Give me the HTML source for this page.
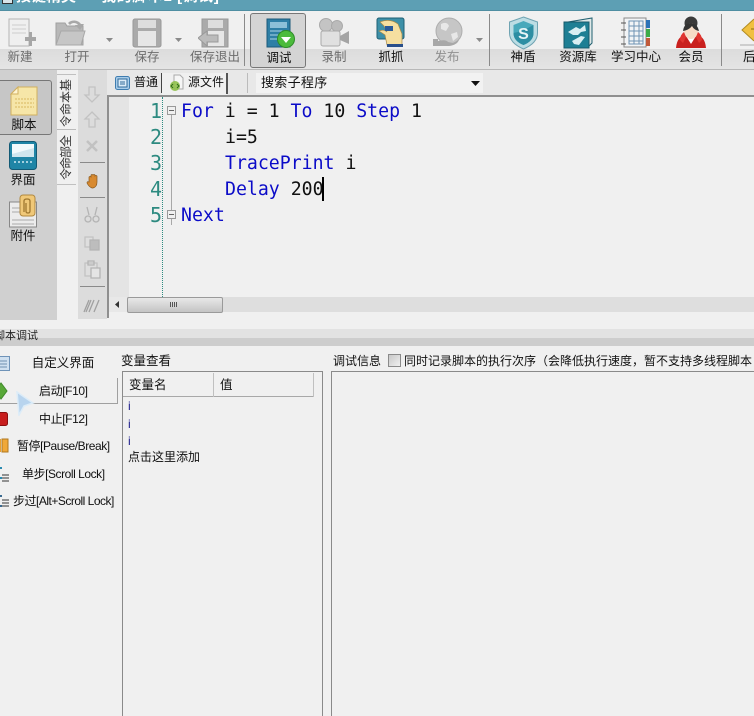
<!DOCTYPE html>
<html><head><meta charset="utf-8">
<style>
html,body{margin:0;padding:0;background:#f0f0f0}
#r{position:relative;width:754px;height:716px;overflow:hidden;background:#f0f0f0;font-family:"Liberation Sans","Noto Sans CJK SC",sans-serif;font-size:12px;color:#111}
#r div,#r svg{position:absolute}
.t{white-space:nowrap;line-height:14px}
.c{text-align:center;white-space:nowrap;line-height:14px}
.g{color:#6c6c6c}
.code{font-family:"DejaVu Sans Mono","Liberation Mono",monospace;font-size:18.2px;line-height:26px;white-space:pre;color:#111}
.b{color:#0b0bc8}
.n{font-family:"DejaVu Sans Mono",monospace;font-size:20px;line-height:26px;color:#2d8a80;text-align:right;width:20px;left:142px}
.sep{background:#8a8a8a;width:1px}
#r .v{left:60px;width:12px;height:12px;font-size:12px;line-height:12px;text-align:center;color:#333;transform:rotate(-90deg)}
</style></head><body><div id="r">

<!-- title bar -->
<div style="left:0;top:0;width:754px;height:11px;background:#5d9fb4"></div>
<div style="left:0;top:10px;width:754px;height:1px;background:#4f8ea2"></div>
<div style="left:0;top:0;width:754px;height:11px;overflow:hidden">
  <div class="t" style="left:2px;top:-7px;width:9px;height:9px;background:#d8e4e8;border:1px solid #333"></div>
  <div class="t" style="left:16px;top:-11px;color:#fff;font-size:15px;font-weight:bold;line-height:15px">按键精灵</div>
  <div class="t" style="left:101px;top:-11px;color:#fff;font-size:15px;font-weight:bold;line-height:15px;letter-spacing:.6px">我的脚本1 [调试]</div>
</div>

<!-- toolbar -->
<div style="left:0;top:11px;width:754px;height:38px;background:#f0f0f0"></div>
<div style="left:0;top:49px;width:754px;height:20px;background:linear-gradient(#dcdcdc,#e4e4e4)"></div>
<div style="left:0;top:69px;width:754px;height:1px;background:#b8b8b8"></div>

<div class="sep" style="left:244px;top:14px;height:52px"></div>
<div class="sep" style="left:489px;top:14px;height:52px"></div>
<div class="sep" style="left:721px;top:14px;height:52px"></div>

<!-- selected debug button -->
<div style="left:250px;top:13px;width:54px;height:53px;background:#d4d4d4;border:1px solid #777;border-radius:3px"></div>

<!-- new -->
<svg style="left:8px;top:18px" width="28" height="30"><path d="M1 1h20v27H1z" fill="#efefef" stroke="#b4b4b4"/><path d="M4 7h14M4 11h14M4 15h14" stroke="#ccc"/><path d="M17 19h4v-5h3v5h4v4h-4v5h-3v-5h-4z" fill="#a6a6a6"/></svg>
<!-- open -->
<svg style="left:54px;top:15px" width="32" height="32"><path d="M2 8h9l2 3h16v19H2z" fill="#b8b8b8" stroke="#a0a0a0"/><path d="M14 8a8 7 0 0 1 13 1l3 0-4 6-5-5 3 0a5 5 0 0 0-8 0z" fill="#a8a8a8"/><path d="M2 30l5-14h24l-4 14z" fill="#c6c6c6" stroke="#a8a8a8"/></svg>
<svg style="left:106px;top:38px" width="8" height="5"><path d="M0 0h7L3.500 4z" fill="#8a8a8a"/></svg>
<!-- save -->
<svg style="left:132px;top:18px" width="30" height="30"><rect x="1" y="1" width="28" height="28" rx="2" fill="#aaa" stroke="#999"/><rect x="6" y="2" width="18" height="8" fill="#ddd"/><rect x="6" y="13" width="18" height="15" fill="#e6e6e6"/></svg>
<svg style="left:175px;top:38px" width="8" height="5"><path d="M0 0h7L3.500 4z" fill="#8a8a8a"/></svg>
<!-- save exit -->
<svg style="left:198px;top:18px" width="33" height="30"><path d="M4 1h26v28H4z" fill="#aaa" stroke="#999"/><rect x="10" y="2" width="15" height="8" fill="#ddd"/><rect x="10" y="13" width="16" height="15" fill="#e6e6e6"/><path d="M0 20l9-7v4h11v7H9v4z" fill="#bbb" stroke="#999"/></svg>
<!-- debug -->
<svg style="left:266px;top:18px" width="31" height="32"><rect x="1" y="1" width="23" height="28" fill="#2e7fa6" stroke="#1b5a7a"/><rect x="4" y="4" width="17" height="6" fill="#8cc0d8"/><path d="M4 13h16M4 17h12M4 21h14" stroke="#a9d4e6"/><circle cx="20" cy="21" r="8.500" fill="#4cbb3c" stroke="#2d8c28"/><path d="M15 19h10l-5 6z" fill="#fff"/></svg>
<!-- record -->
<svg style="left:318px;top:18px" width="33" height="30"><circle cx="8" cy="7" r="6.500" fill="#c4c4c4" stroke="#aaa"/><circle cx="19" cy="8" r="5.500" fill="#bbb" stroke="#aaa"/><rect x="3" y="13" width="19" height="15" rx="2" fill="#e0e0e0" stroke="#aaa"/><path d="M22 18l9-5v13l-9-4z" fill="#a4a4a4"/></svg>
<!-- grab -->
<svg style="left:376px;top:17px" width="30" height="32"><rect x="1" y="1" width="27" height="21" rx="2" fill="#3d90a8" stroke="#1f5f75"/><path d="M4 5q10-4 18 2l4 10v11H11l-2-10-6-4q5-2 8 1l-3-6z" fill="#f6dfa0" stroke="#a88a4a" stroke-width=".7"/><rect x="9" y="9" width="8" height="5" fill="#2a5a9a"/><rect x="11" y="27" width="16" height="3" fill="#2a4f8a"/></svg>
<!-- publish -->
<svg style="left:432px;top:17px" width="32" height="31"><circle cx="17" cy="14" r="13" fill="#c6c6c6" stroke="#adadad"/><path d="M9 7q6-3 8 2l-3 5-5-2zM19 17l6-2 1 5-5 4z" fill="#e8e8e8"/><path d="M1 22h5v7H1zM6 24q8-2 10 1l5 1 6-3q-2 5-10 6H6z" fill="#a8a8a8"/></svg>
<svg style="left:476px;top:38px" width="8" height="5"><path d="M0 0h7L3.500 4z" fill="#8a8a8a"/></svg>
<!-- shield -->
<svg style="left:508px;top:16px" width="31" height="34"><path d="M15.500 1l14 5v11q0 10-14 16Q1.500 27 1.500 17V6z" fill="#bcdde4" stroke="#6fa3b2"/><path d="M15.500 5l10 4v8q0 8-10 12-10-4-10-12V9z" fill="#48a9bb"/><path d="M5.500 17q10-2 20-8v8q0 8-10 12-10-4-10-12z" fill="#2d8ea3"/><text x="15.500" y="23" text-anchor="middle" font-family="Liberation Sans" font-size="16" font-weight="bold" fill="#e6f4f6">S</text></svg>
<!-- resource -->
<svg style="left:563px;top:17px" width="32" height="32"><path d="M5 5l24-4v25l-4 4z" fill="#dfe8e8" stroke="#1f5f70"/><rect x="1" y="5" width="25" height="26" fill="#1e7f94" stroke="#175a6a"/><path d="M5 15l8-5 4 2 5-4 1 6-5 1-3 3-5 0zM9 24l9-5 4 1-6 8-5-1z" fill="#d8eef2"/></svg>
<!-- study -->
<svg style="left:620px;top:17px" width="32" height="31"><rect x="4" y="1" width="22" height="29" fill="#f2f4f6" stroke="#8a8a8a"/><path d="M9 4h14v23H9zM9 9h14M9 14h14M9 19h14M9 24h14M14 4v23M19 4v23" fill="none" stroke="#6f93b4"/><path d="M1 6h5M1 13h5M1 20h5M1 27h5" stroke="#555"/><rect x="26" y="3" width="4" height="8" fill="#2c73b8"/><rect x="26" y="12" width="4" height="8" fill="#3bab4a"/><rect x="26" y="21" width="4" height="8" fill="#c05a3a"/></svg>
<!-- member -->
<svg style="left:675px;top:16px" width="32" height="34"><path d="M1 32q1-12 10-13l5 5 5-5q9 1 10 13z" fill="#c9201e"/><path d="M11 20l5 8 5-8z" fill="#fff"/><ellipse cx="16" cy="7" rx="6.500" ry="6.500" fill="#3a3a3a"/><ellipse cx="16" cy="15" rx="7" ry="8" fill="#f7dcc6"/><path d="M8 15q1-8 8-8 6 0 8 8-5-1-7-5-3 4-9 5z" fill="#333"/><path d="M5 24q0-5 4-8l2 5-3 6zM27 24q0-5-4-8l-2 5 3 6z" fill="#e0352f"/></svg>
<!-- back -->
<svg style="left:740px;top:18px" width="14" height="28"><path d="M14 1L2 12l12 11" fill="#f0c040" stroke="#b08a20"/><path d="M11 11H14" stroke="#8a6a10"/><path d="M0 27h14" stroke="#aaa"/></svg>

<div class="c g" style="left:5px;top:50px;width:30px;font-size:12.500px">新建</div>
<div class="c g" style="left:62px;top:50px;width:30px;font-size:12.500px">打开</div>
<div class="c g" style="left:132px;top:50px;width:30px;font-size:12.500px">保存</div>
<div class="c g" style="left:187px;top:50px;width:56px;font-size:12.500px">保存退出</div>
<div class="c" style="left:264px;top:51px;width:30px;font-size:12.500px">调试</div>
<div class="c g" style="left:319px;top:50px;width:30px;font-size:12.500px">录制</div>
<div class="c" style="left:376px;top:50px;width:30px;font-size:12.500px">抓抓</div>
<div class="c" style="left:432px;top:50px;width:30px;font-size:12.500px;color:#909090">发布</div>
<div class="c" style="left:508px;top:50px;width:30px;font-size:12.500px">神盾</div>
<div class="c" style="left:555px;top:50px;width:46px;font-size:12.500px">资源库</div>
<div class="c" style="left:608px;top:50px;width:56px;font-size:12.500px">学习中心</div>
<div class="c" style="left:676px;top:50px;width:30px;font-size:12.500px">会员</div>
<div class="t" style="left:743px;top:50px;font-size:12.500px">后</div>

<!-- tab row -->
<div style="left:107px;top:70px;width:647px;height:25px;background:#e8e8e8"></div>
<div style="left:107px;top:95px;width:647px;height:2px;background:#8f8f8f"></div>
<svg style="left:115px;top:76px" width="15" height="14"><rect x=".5" y=".5" width="14" height="13" rx="2" fill="#a9cdea" stroke="#3f7db0"/><rect x="3" y="3" width="9" height="8" fill="#dcecf8" stroke="#2f6a9a"/><path d="M5 6h5M5 8h5" stroke="#2f6a9a"/></svg>
<div class="t" style="left:134px;top:75px;font-size:12px">普通</div>
<div style="left:161px;top:73px;width:1px;height:20px;background:#444"></div>
<div style="left:162px;top:73px;width:65px;height:22px;background:#f0f0f0"></div>
<div style="left:226px;top:73px;width:2px;height:21px;background:#555"></div>
<svg style="left:169px;top:74px" width="15" height="17"><path d="M5 1h6l3 3v11H5z" fill="#f6f6f6" stroke="#aaa"/><circle cx="6" cy="12" r="5" fill="#8fc04a" opacity=".9"/><path d="M4 10l-2 2 2 2M8 10l2 2-2 2" stroke="#2f6a1a" fill="none"/></svg>
<div class="t" style="left:188px;top:75px;font-size:12px">源文件</div>
<div style="left:247px;top:73px;width:1px;height:20px;background:#bbb"></div>
<div style="left:256px;top:73px;width:227px;height:20px;background:#f2f2f2"></div>
<div class="t" style="left:261px;top:76px;font-size:13px;letter-spacing:.3px">搜索子程序</div>
<svg style="left:471px;top:81px" width="9" height="5"><path d="M0 0h9L4.500 5z" fill="#111"/></svg>

<!-- left panel -->
<div style="left:0;top:70px;width:57px;height:250px;background:#d0d0d0"></div>
<div style="left:-3px;top:80px;width:53px;height:53px;background:#c6c6c6;border:1px solid #777;border-radius:3px"></div>
<svg style="left:10px;top:86px" width="28" height="30"><path d="M8 1h19v28H1V8z" fill="#f6e6a8" stroke="#d0b060"/><path d="M1 8l7-7v7z" fill="#fff5d0" stroke="#d0b060"/><path d="M5 13h19M5 17h19M5 21h19" stroke="#d8b860" stroke-dasharray="2 1"/></svg>
<div class="c" style="left:9px;top:118px;width:30px;font-size:12.500px">脚本</div>
<svg style="left:9px;top:141px" width="28" height="29"><rect x=".5" y=".5" width="27" height="28" rx="3" fill="#1f85a6" stroke="#135a75"/><rect x="3" y="3" width="22" height="13" fill="#cfe6ee"/><path d="M3 3h22v4L3 13z" fill="#f2fafc"/><path d="M5 21h18" stroke="#cfeaf2" stroke-dasharray="2 2" stroke-width="1.500"/></svg>
<div class="c" style="left:8px;top:173px;width:30px;font-size:12.500px">界面</div>
<svg style="left:9px;top:194px" width="29" height="34"><rect x=".5" y="8" width="27" height="25" fill="#ececec" stroke="#888"/><path d="M3 14h14M3 18h14M3 26h22M3 30h22" stroke="#aaa"/><rect x="11" y="1" width="15" height="21" rx="3" fill="#f0c878" stroke="#b08840"/><path d="M15 18V7q0-2 3-2t3 2v10q0 2-2 2t-2-2V9" fill="none" stroke="#a07830" stroke-width="1.300"/></svg>
<div class="c" style="left:8px;top:229px;width:30px;font-size:12.500px">附件</div>

<!-- vertical tabs -->
<div style="left:57px;top:74px;width:19px;height:111px;background:#f0f0f0;border-top:1px solid #c0c0c0;border-bottom:1px solid #c0c0c0;box-sizing:border-box"></div>
<div style="left:57px;top:129px;width:19px;height:1px;background:#bbb"></div>
<div class="v" style="top:79px">基</div>
<div class="v" style="top:91px">本</div>
<div class="v" style="top:103px">命</div>
<div class="v" style="top:115px">令</div>
<div class="v" style="top:135px">全</div>
<div class="v" style="top:146px">部</div>
<div class="v" style="top:157px">命</div>
<div class="v" style="top:168px">令</div>

<!-- tool strip -->
<div style="left:78px;top:70px;width:29px;height:249px;background:#dcdcdc"></div>
<div style="left:107px;top:96px;width:2px;height:222px;background:#8f8f8f"></div>
<svg style="left:78px;top:70px" width="29" height="249" fill="none" stroke="#c2c2c2" stroke-width="1.300">
<path d="M11 17h6v8h4l-7 7-7-7h4z"/>
<path d="M14 42l7 7h-4v8h-6v-8H7z"/>
<path d="M9 71l10 10M19 71L9 81" stroke-width="2.500"/>
<path d="M2 92.500h25M2 127.500h25M2 216.500h25" stroke="#8a8a8a" stroke-width="1"/>
<path d="M11 145l-2-8M17 145l2-8" stroke="#b4b4b4"/>
<circle cx="10" cy="149" r="3" stroke="#b4b4b4"/><circle cx="18" cy="149" r="3" stroke="#b4b4b4"/>
<path d="M7 167h8v10H7z" fill="#dedede" stroke="#c2c2c2"/><path d="M12 170h9v10h-9z" fill="#bdbdbd" stroke="#b4b4b4"/>
<path d="M7 193h12v13H7z" fill="#dedede"/><path d="M10 191h6v4h-6z" stroke="#b4b4b4"/><path d="M13 198h9v10h-9z" fill="#e4e4e4" stroke="#b4b4b4"/>
<path d="M11 230l-5 12M16 230l-5 12M21 230l-5 12M13 230l-5 12" stroke-width="1.300" stroke="#a0a0a0"/>
</svg>
<svg style="left:86px;top:173px" width="14" height="16"><path d="M3 8V4q1-1 2 0V2q1-1 2 0v0q1-1 2 0v1q1-1 2 0v6q0 5-4 6H6Q3 14 1 10q0-2 2-1z" fill="#d88a30" stroke="#8a5a20" stroke-width=".7"/></svg>

<!-- editor -->
<div style="left:109px;top:97px;width:645px;height:200px;background:#f0f0f0"></div>
<div style="left:109px;top:97px;width:20px;height:200px;background:#e4e4e4"></div>
<div style="left:162px;top:97px;width:0;height:200px;border-left:1px dotted #2d8a80"></div>

<div class="n" style="top:98px">1</div>
<div class="n" style="top:124px">2</div>
<div class="n" style="top:150px">3</div>
<div class="n" style="top:176px">4</div>
<div class="n" style="top:202px">5</div>

<div style="left:171px;top:107px;width:1px;height:118px;background:#a8a8a8"></div>
<div style="left:167px;top:106px;width:7px;height:7px;background:#f0f0f0;border:1px solid #999"></div>
<div style="left:169px;top:110px;width:5px;height:1px;background:#666"></div>
<div style="left:167px;top:210px;width:7px;height:7px;background:#f0f0f0;border:1px solid #999"></div>
<div style="left:169px;top:214px;width:5px;height:1px;background:#666"></div>

<div class="code" style="left:181px;top:99px"><span class="b">For</span> i = 1 <span class="b">To</span> 10 <span class="b">Step</span> 1</div>
<div class="code" style="left:225px;top:125px">i=5</div>
<div class="code" style="left:225px;top:151px"><span class="b">TracePrint</span> i</div>
<div class="code" style="left:225px;top:177px"><span class="b">Delay</span> 200</div>
<div class="code" style="left:181px;top:203px"><span class="b">Next</span></div>
<div style="left:322px;top:177px;width:2px;height:24px;background:#000"></div>

<!-- h scrollbar -->
<div style="left:109px;top:297px;width:645px;height:15px;background:#dedede"></div>
<div style="left:109px;top:297px;width:18px;height:15px;background:#e8e8e8"></div>
<svg style="left:115px;top:301px" width="5" height="7"><path d="M4 0v7L0 3.500z" fill="#333"/></svg>
<div style="left:127px;top:297px;width:94px;height:14px;background:linear-gradient(#e8e8e8,#c4c4c4);border:1px solid #9a9a9a;border-radius:2px"></div>
<div style="left:170px;top:302px;width:7px;height:5px;background:repeating-linear-gradient(90deg,#555 0 1px,transparent 1px 2px)"></div>

<!-- debug header -->
<div style="left:0;top:329px;width:754px;height:9px;background:#e2e2e2"></div>
<div style="left:0;top:338px;width:754px;height:8px;background:#cdcdcd"></div>
<div class="t" style="left:-6px;top:329px;font-size:11px;color:#222">脚本调试</div>

<!-- debug left buttons -->
<svg style="left:-4px;top:356px" width="14" height="15"><rect x=".5" y=".5" width="13" height="14" fill="#cfe0f0" stroke="#6f93b8"/><path d="M3 5h8M3 8h8M3 11h8" stroke="#6f8fb0"/></svg>
<div class="c" style="left:28px;top:356px;width:70px;font-size:12.500px">自定义界面</div>

<div style="left:0;top:403px;width:118px;height:1px;background:#a0a0a0"></div>
<div style="left:117px;top:378px;width:1px;height:26px;background:#a0a0a0"></div>
<svg style="left:-5px;top:382px" width="13" height="18"><path d="M0 9l6-8 6 8-6 8z" fill="#58a838" stroke="#3f8a2a"/></svg>
<svg style="left:15px;top:391px" width="20" height="25"><path d="M2 1l16 11-9 3-5 9z" fill="#b8d4ee" stroke="#dcecf8" stroke-width="1.500"/></svg>
<div class="t" style="left:39px;top:384px;font-size:12px;letter-spacing:-.4px">启动[F10]</div>

<svg style="left:-4px;top:412px" width="12" height="14"><rect x=".5" y=".5" width="11" height="13" rx="2" fill="#c81e1e" stroke="#8a1010"/></svg>
<div class="t" style="left:39px;top:412px;font-size:12px;letter-spacing:-.4px">中止[F12]</div>

<svg style="left:-4px;top:438px" width="13" height="15"><rect x="0" y="1" width="5" height="13" fill="#e8a030"/><rect x="6" y="1" width="6" height="13" fill="#f0a838" stroke="#b07820"/></svg>
<div class="t" style="left:17px;top:439px;font-size:12px;letter-spacing:-.45px">暂停[Pause/Break]</div>

<svg style="left:-3px;top:467px" width="13" height="16"><path d="M0 1h5M0 6h3M0 11h5" stroke="#2a8ab0" stroke-width="2"/><path d="M5 8h7M5 11h7M5 14h7" stroke="#333"/></svg>
<div class="t" style="left:22px;top:467px;font-size:12px;letter-spacing:-.45px">单步[Scroll Lock]</div>

<svg style="left:-3px;top:495px" width="13" height="16"><path d="M0 1h5M0 6h3M0 11h5" stroke="#3a6a90" stroke-width="2"/><path d="M5 5h7M5 8h7M5 11h7" stroke="#333"/></svg>
<div class="t" style="left:13px;top:494px;font-size:12px;letter-spacing:-.5px">步过[Alt+Scroll Lock]</div>

<!-- variables -->
<div class="t" style="left:121px;top:354px;font-size:12.500px">变量查看</div>
<div style="left:122px;top:371px;width:201px;height:346px;border:1px solid #8a8a8a;border-bottom:none;box-sizing:border-box"></div>
<div style="left:123px;top:396px;width:191px;height:1px;background:#a8a8a8"></div>
<div style="left:313px;top:373px;width:1px;height:24px;background:#c0c0c0"></div>
<div style="left:213px;top:373px;width:1px;height:24px;background:#c0c0c0"></div>
<div class="t" style="left:129px;top:378px;font-size:12.500px">变量名</div>
<div class="t" style="left:220px;top:378px;font-size:12.500px">值</div>
<div class="t" style="left:128px;top:399px;color:#1a1a8a">i</div>
<div class="t" style="left:128px;top:417px;color:#1a1a8a">i</div>
<div class="t" style="left:128px;top:434px;color:#1a1a8a">i</div>
<div class="t" style="left:128px;top:450px;font-size:12px">点击这里添加</div>

<!-- debug info -->
<div class="t" style="left:333px;top:354px;font-size:12px">调试信息</div>
<div style="left:388px;top:354px;width:11px;height:11px;background:linear-gradient(135deg,#c8c8c8,#f0f0f0);border:1px solid #8a8a8a"></div>
<div class="t" style="left:404px;top:354px;font-size:12px">同时记录脚本的执行次序（会降低执行速度，暂不支持多线程脚本</div>
<div style="left:331px;top:371px;width:430px;height:346px;border:1px solid #8a8a8a;box-sizing:border-box"></div>

</div></body></html>
